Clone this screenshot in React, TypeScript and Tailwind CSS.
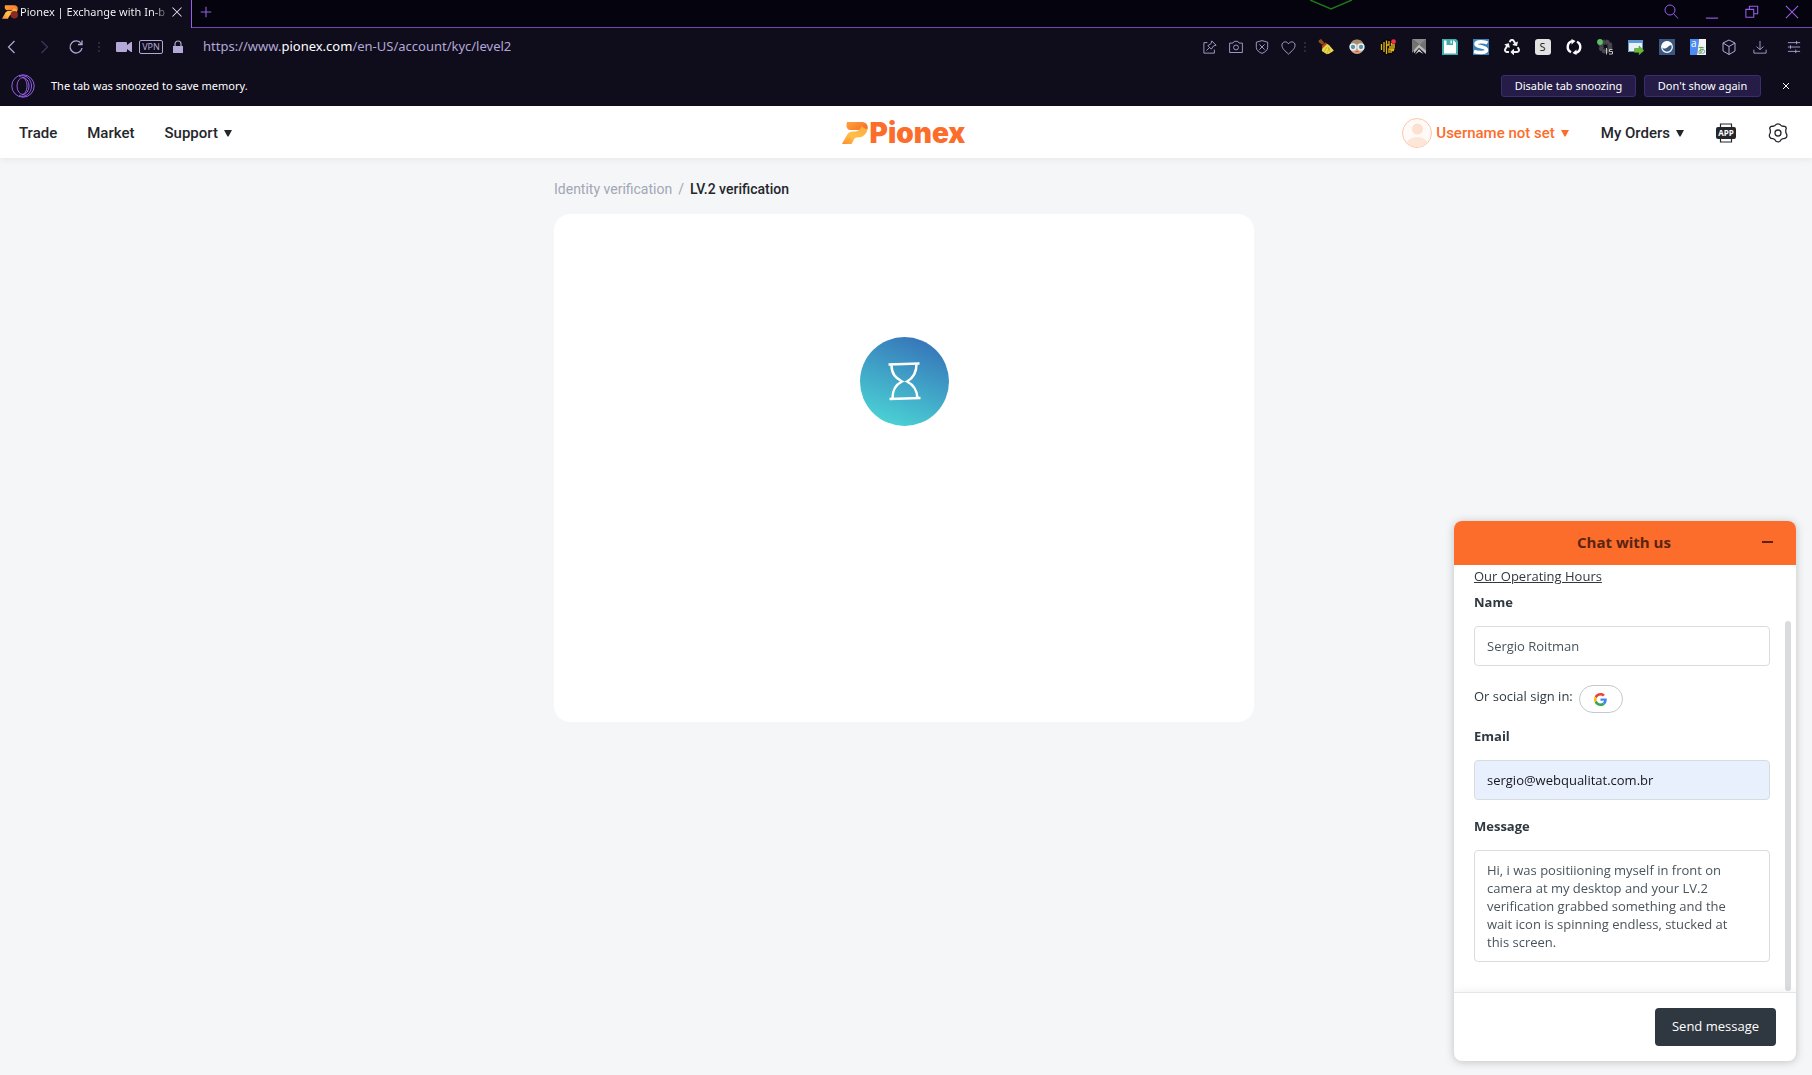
import React from 'react';
import { FaRecycle } from 'react-icons/fa';

type IconProps = { className?: string; children?: React.ReactNode };

const Line: React.FC<IconProps> = ({ className = 'w-4 h-4', children }) => (
  <svg viewBox="0 0 16 16" className={className} fill="none" stroke="currentColor" strokeWidth="1" aria-hidden="true">
    {children}
  </svg>
);

const Solid: React.FC<IconProps> = ({ className = 'w-4 h-4 overflow-visible', children }) => (
  <svg viewBox="0 0 16 16" className={className} aria-hidden="true">
    {children}
  </svg>
);

const PionexMark: React.FC<IconProps> = ({ className, children }) => (
  <svg viewBox="0 0 26 22" className={className} aria-hidden="true">
    <defs>
      <linearGradient id="markTop" x1="0" y1="0" x2="1" y2="0.6">
        <stop offset="0" stopColor="#ffa53a" />
        <stop offset="1" stopColor="#f4742f" />
      </linearGradient>
      <linearGradient id="markLeg" x1="1" y1="0" x2="0" y2="1">
        <stop offset="0" stopColor="#ffab3c" />
        <stop offset="0.6" stopColor="#ffbf4a" />
        <stop offset="1" stopColor="#ff8a2e" />
      </linearGradient>
    </defs>
    <path d="M5 0h14.500c5 0 7 3.500 6 7.500L16 8H8.500C5 8 3.600 4.500 5 0z" fill="url(#markTop)" />
    <path d="M25.500 7c-1 5.500-5 8.500-9.500 8.500-2.500 0-3 .5-4 2L9.500 22H0l5-9c1.500-2.800 3.500-3.500 6.500-3.500C16 9.500 18.500 8 19.500 4c1.500 2 4 3 6 3z" fill="url(#markLeg)" />
    {children}
  </svg>
);

const OperaLogo: React.FC = () => (
  <svg viewBox="0 0 24 24" className="h-6 w-6 text-[#9560ea]" fill="none" stroke="currentColor" strokeWidth="1" aria-hidden="true">
    <circle cx="12" cy="12" r="11.200" />
    <ellipse cx="12" cy="12" rx="6" ry="8.500" />
    <path d="M8 2.500c7-3 12.500 3 12.500 9.500S15 24.500 8 21.500" />
    <path d="M11 3.500c3 0 5 4 5 8.500s-2 8.500-5 8.500" />
  </svg>
);

const GoogleLogo: React.FC = () => (
  <svg viewBox="0 0 48 48" className="h-[13px] w-[13px]" aria-hidden="true">
    <path fill="#EA4335" d="M24 9.500c3.540 0 6.710 1.220 9.210 3.600l6.850-6.850C35.900 2.380 30.470 0 24 0 14.620 0 6.510 5.380 2.560 13.220l7.980 6.190C12.430 13.720 17.740 9.500 24 9.500z" />
    <path fill="#4285F4" d="M46.980 24.550c0-1.570-.15-3.090-.38-4.550H24v9.020h12.940c-.58 2.960-2.260 5.480-4.780 7.180l7.730 6c4.510-4.180 7.090-10.360 7.090-17.650z" />
    <path fill="#FBBC05" d="M10.530 28.590c-.48-1.450-.76-2.990-.76-4.590s.27-3.140.76-4.590l-7.980-6.190C.92 16.460 0 20.120 0 24c0 3.880.92 7.540 2.560 10.780l7.970-6.190z" />
    <path fill="#34A853" d="M24 48c6.480 0 11.930-2.130 15.890-5.810l-7.730-6c-2.150 1.450-4.920 2.300-8.160 2.300-6.260 0-11.570-4.220-13.470-9.910l-7.980 6.190C6.510 42.620 14.620 48 24 48z" />
  </svg>
);

const Caret: React.FC = () => (
  <svg viewBox="0 0 8 7" className="h-[7px] w-2" fill="currentColor" aria-hidden="true">
    <path d="M0 0h8L4.500 6.500h-1z" />
  </svg>
);

const Dots: React.FC = () => (
  <svg viewBox="0 0 2 12" className="h-3 w-0.5 text-[#2c2740]" fill="currentColor" aria-hidden="true">
    <path d="M0 1h2v2H0zM0 5h2v2H0zM0 9h2v2H0z" />
  </svg>
);

const pageActions = [
  {
    label: 'Share',
    icon: <Line className="h-[14px] w-[14px]"><path d="M5 3H1v12h12v-4M10 1l5 5-3 .8-2.500 3.700-4-4L9.300 4zM7.500 8.500 4 12" /></Line>,
  },
  {
    label: 'Snapshot',
    icon: <Line className="h-[14px] w-[14px]"><path d="M.7 3.500h3.800l1.500-2h4l1.500 2h3.800v10.800H.7z" /><circle cx="8" cy="8.500" r="2.800" /></Line>,
  },
  {
    label: 'Block ads',
    icon: <Line className="h-[14px] w-[14px]"><path d="M8 .7l6.500 1.800v6c0 3-3 5.500-6.500 6.800-3.500-1.300-6.500-3.800-6.500-6.800v-6zM5 5l6 6M11 5l-6 6" /></Line>,
  },
  {
    label: 'Bookmark',
    icon: <Line className="h-[15px] w-[15px]"><path d="M8 15C4 11.500 1 9 1 5.500 1 2 5.500.5 8 4c2.500-3.500 7-2 7 1.500C15 9 12 11.500 8 15z" /></Line>,
  },
];

const extensions = [
  {
    label: 'Cleaner',
    icon: (
      <Solid>
        <path d="M.5 1.500 3 0l3.500 4-2.300 1.800L1 3.500z" fill="#8f4f1c" />
        <path d="M4.500 8.500 8.500 4.500 11 6l4.800 5.500c-2 1.500-4 3.500-7 3.700l-5-3.200z" fill="#e8d84a" />
        <path d="M3.500 7 7.500 3.500l1.500 1.500L5 9z" fill="#c5401c" />
        <path d="M6 13l3-5M9 15l2-6M12.500 13.500 10.500 8" stroke="#b39b1c" strokeWidth=".6" />
      </Solid>
    ),
  },
  {
    label: 'Reader',
    icon: (
      <Solid>
        <circle cx="8" cy="8" r="7" fill="#dba483" />
        <path d="M1.200 7C1.500 2.500 4.500.5 8 .5s6.500 2 6.800 6.500L10 4.500z" fill="#a58a6c" />
        <circle cx="4" cy="8" r="2.900" fill="#5d93a8" stroke="#e6f2f6" strokeWidth="1.500" />
        <circle cx="12" cy="8" r="2.900" fill="#5d93a8" stroke="#e6f2f6" strokeWidth="1.500" />
        <path d="M6.500 12.500h3" stroke="#b5524a" />
      </Solid>
    ),
  },
  {
    label: 'Circuit',
    icon: (
      <Solid>
        <circle cx="8" cy="8" r="7.800" fill="#080704" />
        <path d="M1.500 5v6M4 3v10M6.500 1.500V15M9 2v4H7M9 14v-4h5.500M11 14v-2.500h3M9 8h6M11.500 4v2H15" stroke="#e3b51c" strokeWidth="1.300" fill="none" />
        <circle cx="13.500" cy="2.700" r="2.400" fill="#f0304e" />
      </Solid>
    ),
  },
  {
    label: 'Mail',
    icon: (
      <Solid>
        <path d="M1 0h14v12l-6-5.500L1 14z" fill="#737373" />
        <path d="M1 0h14L8 6.500z" fill="#8c8c8c" />
        <path d="M8 5.500l7 6v3.500l-7-6-5 5.500V11z" fill="#b9b9b9" />
        <path d="M8 10l4.500 5L8 12.500 4 15.500z" fill="#dcdcdc" />
        <path d="M1 0l7 6" stroke="#4a4a4a" strokeWidth=".7" fill="none" />
      </Solid>
    ),
  },
  {
    label: 'Save',
    icon: (
      <Solid>
        <path d="M0 0h14l2 2v14H0z" fill="#41acae" />
        <path d="M2 1.500h2.500V6H11V1.500h1L14 4v10.500H2z" fill="#fff" />
        <path d="M8.500 1.500h1.300V4.500H8.500z" fill="#fff" />
      </Solid>
    ),
  },
  {
    label: 'Stylish',
    icon: (
      <Solid>
        <path d="M0 0h16v16H0z" fill="#3f82b8" />
        <path d="M14.500 4C12 2.500 3 1.800 3 5s10.500 2.500 10.500 6S4 13.500 1 12.500" stroke="#fff" strokeWidth="3.600" fill="none" />
      </Solid>
    ),
  },
  {
    label: 'Recycle',
    icon: <FaRecycle className="h-4 w-4 text-[#f0f0f0]" />,
  },
  {
    label: 'Scripts',
    icon: (
      <span className="flex h-4 w-4 items-center justify-center rounded-[3px] bg-[#e2e2e2] text-[11px] leading-4 text-[#222]">S</span>
    ),
  },
  {
    label: 'Refresh all',
    icon: (
      <Solid>
        <path d="M5 13.300A6 6 0 0 1 6 2.200M11 2.700a6 6 0 0 1-1 11.100" stroke="#fff" strokeWidth="2.400" fill="none" />
        <path d="M5.500 0v5.500L9.500 2zM10.500 16v-5.500L6.500 14z" fill="#fff" />
      </Solid>
    ),
  },
  {
    label: 'Settings switcher',
    icon: (
      <Solid>
        <circle cx="8.500" cy="7.500" r="4.500" fill="none" stroke="#47474c" strokeWidth="5" strokeDasharray="2.600 .9" />
        <circle cx="8.500" cy="7.500" r="4.500" fill="none" stroke="#47474c" strokeWidth="3" />
        <circle cx="3" cy="3" r="2.900" fill="#5cc068" />
        <path d="M9.500 9v6.500M15.500 10.500h-3v2h3v2.500H12" stroke="#c4c4c4" strokeWidth="1" fill="none" />
      </Solid>
    ),
  },
  {
    label: 'Open window',
    icon: (
      <Solid>
        <path d="M0 1h15v12H0z" fill="#e9f0f6" />
        <path d="M0 1h15v3H0z" fill="#5c9bdb" />
        <path d="M.5 1.500h14v11H.5z" fill="none" stroke="#5c96cc" />
        <path d="M6.500 9.500H11V7l5 4.500-5 4.500v-2.500H6.500z" fill="#6cb63a" stroke="#3f8a1c" strokeWidth=".5" />
      </Solid>
    ),
  },
  {
    label: 'Browse',
    icon: (
      <Solid>
        <path d="M0 0h16v16H0z" fill="#3a587f" />
        <circle cx="8" cy="8" r="5.300" fill="none" stroke="#fff" strokeWidth="1.200" />
        <path d="M2.500 8C3 4.500 5 2.500 8 2.500s4.500 1.500 5 3.500c-3-.5-4 3-7 3.500-1.500.2-2.500-.5-3.500-1.500z" fill="#fff" />
      </Solid>
    ),
  },
  {
    label: 'Translate',
    icon: (
      <Solid>
        <path d="M0 0h9l-2 16H0z" fill="#4a8cf5" />
        <path d="M9 0h7v16H7z" fill="#f4f4f4" />
        <text x="1" y="8" fontSize="10" fill="#fff" fontFamily="Open Sans">a</text>
        <text x="7.500" y="14" fontSize="8" fill="#2b8a4b" fontFamily="Noto Sans CJK JP">あ</text>
      </Solid>
    ),
  },
  {
    label: 'Extensions',
    icon: <Line><path d="M8 1l6 3v8l-6 3.500L2 12V4zM2 4l6 3.500L14 4M8 7.500v8" /></Line>,
  },
];

const TabStrip: React.FC = () => (
  <div className="relative flex h-7 items-stretch bg-[#05030d]">
    <div className="flex w-48 shrink-0 items-center border-r border-[#9560ea] bg-[#0f0c1b] pb-1 pl-0.5">
      <PionexMark className="h-[14px] w-4 shrink-0">
        <circle cx="20" cy="15.500" r="6" fill="#8a2a22" />
      </PionexMark>
      <span className="ml-0.5 flex-1 bg-linear-to-r from-white from-88% to-transparent bg-clip-text text-[11px] whitespace-nowrap text-transparent">
        Pionex | Exchange with In-b
      </span>
      <button aria-label="Close tab" className="mr-2 text-[#e6e0f5]">
        <Line className="h-3 w-3"><path d="M2 2l12 12M14 2 2 14" strokeWidth="1.400" /></Line>
      </button>
    </div>
    <div className="flex flex-1 items-center justify-between border-b border-[#6f49b0] pr-[13px] pb-1 pl-2 text-[#9560ea]">
      <button aria-label="New tab"><Line className="h-3 w-3"><path d="M8 1v14M1 8h14" strokeWidth="1.400" /></Line></button>
      <div className="flex items-center gap-[26px]">
        <button aria-label="Search tabs"><Line><circle cx="7" cy="6" r="5" /><path d="M10.500 9.500l4.500 5" /></Line></button>
        <button aria-label="Minimize"><Line className="h-[14px] w-[14px]"><path d="M1 15h14" strokeWidth="1.300" /></Line></button>
        <button aria-label="Restore"><Line className="h-[14px] w-[14px]"><path d="M1 5h9v9H1zM5 5V1.500h9.500V10H10" strokeWidth="1.200" /></Line></button>
        <button aria-label="Close window"><Line className="h-[14px] w-[14px]"><path d="M1 1l14 14M15 1 1 15" strokeWidth="1.200" /></Line></button>
      </div>
    </div>
    <svg viewBox="0 0 42 10" className="absolute top-0 right-[460px] h-[10px] w-[42px]" fill="none" stroke="#1c7a17" strokeWidth="1.500" aria-hidden="true">
      <path d="M0 0l21 9L42 0" />
    </svg>
  </div>
);

const AddressBar: React.FC = () => (
  <div className="flex h-[38px] items-center justify-between bg-[#0f0c1b] text-[#b4a8d8]">
    <div className="flex items-center">
      <button aria-label="Back" className="ml-1"><Line><path d="M10.500 2 4.500 8l6 6" strokeWidth="1.200" /></Line></button>
      <button aria-label="Forward" className="ml-4 text-[#3f3859]"><Line><path d="M5.500 2l6 6-6 6" strokeWidth="1.200" /></Line></button>
      <button aria-label="Reload" className="mr-[14px] ml-4"><Line><path d="M13 4.500A6 6 0 1 0 14 9M14 1.500v4h-4" strokeWidth="1.300" /></Line></button>
      <Dots />
      <svg viewBox="0 0 16 12" className="ml-4 h-3 w-4" fill="currentColor" aria-hidden="true">
        <path d="M1 1h9a1 1 0 0 1 1 1v2l4-3h1v10h-1l-4-3v2a1 1 0 0 1-1 1H1a1 1 0 0 1-1-1V2a1 1 0 0 1 1-1z" />
      </svg>
      <span className="ml-[7px] flex h-[14px] w-6 items-center justify-center rounded-[2px] border border-current text-[9px] leading-3">VPN</span>
      <svg viewBox="0 0 10 14" className="ml-[10px] h-[14px] w-[10px]" aria-hidden="true">
        <path d="M0 6h10v7H0z" fill="currentColor" />
        <path d="M2 6V4a3 3 0 0 1 6 0v2" fill="none" stroke="currentColor" strokeWidth="1.200" />
      </svg>
      <span className="ml-5 text-[13px]">
        https://www.<span className="text-white">pionex.com</span>/en-US/account/kyc/level2
      </span>
    </div>
    <div className="flex items-center">
      <div className="flex items-center">
        {pageActions.map((a) => (
          <button key={a.label} aria-label={a.label} className="flex w-[26px] justify-center">{a.icon}</button>
        ))}
      </div>
      <span className="mr-1 ml-[3px]"><Dots /></span>
      <div className="flex items-center">
        {extensions.map((e) => (
          <button key={e.label} aria-label={e.label} className="flex w-[31px] justify-center">{e.icon}</button>
        ))}
      </div>
      <button aria-label="Downloads" className="flex w-8 justify-center">
        <Line className="h-[14px] w-[14px]"><path d="M8 1v10M4 7.500 8 11l4-3.500M1 11v4h14v-4" /></Line>
      </button>
      <button aria-label="Easy setup" className="mr-1 flex w-8 justify-center pl-1">
        <Line className="h-[14px] w-[14px]"><path d="M1 3h14M1 8h14M1 13h14M11 1v4M4 6v4M10 11v4" /></Line>
      </button>
    </div>
  </div>
);

const SnoozeBar: React.FC = () => (
  <div className="flex h-10 items-center justify-between bg-[#0f0c1b] pr-[22px] pl-[11px] text-[11px] text-white">
    <div className="flex items-center gap-4">
      <OperaLogo />
      <span>The tab was snoozed to save memory.</span>
    </div>
    <div className="flex items-center">
      <button className="h-[22px] w-[135px] rounded-[3px] border border-[#3c2d72] bg-[#251d47]">Disable tab snoozing</button>
      <button className="ml-2 h-[22px] w-[117px] rounded-[3px] border border-[#3c2d72] bg-[#251d47]">Don't show again</button>
      <button aria-label="Dismiss" className="ml-[21px]"><Line className="h-2 w-2"><path d="M2 2l12 12M14 2 2 14" strokeWidth="2" /></Line></button>
    </div>
  </div>
);

const SiteHeader: React.FC = () => (
  <header className="relative z-10 grid h-[52px] grid-cols-[1fr_auto_1fr] items-center bg-white pt-0.5 pr-6 pl-[19px] font-['Roboto',sans-serif] text-[15px] font-medium text-[#24262b] shadow-[0_2px_6px_rgba(0,0,0,0.06)]">
    <nav className="flex items-center gap-[30px]">
      <a href="#trade">Trade</a>
      <a href="#market">Market</a>
      <a href="#support" className="flex items-center gap-1.5">Support <Caret /></a>
    </nav>
    <a href="#home" className="flex items-center gap-0.5 font-['Inter',sans-serif] text-[28px] leading-8 font-black text-[#fc6d2c]">
      <PionexMark className="h-[22px] w-[26px]" />
      Pionex
    </a>
    <div className="flex items-center justify-end">
      <a href="#account" className="flex items-center text-[#fc6d2c]">
        <svg viewBox="0 0 30 30" className="mr-1 h-[30px] w-[30px]" aria-hidden="true">
          <circle cx="15" cy="15" r="14.500" fill="#fffaf7" stroke="#fbc7a5" />
          <circle cx="15.500" cy="11" r="5.500" fill="#fde0cf" />
          <path d="M5 24.500c2-7 18-7 20.500 0A14 14 0 0 1 5 24.500z" fill="#fde6d8" />
        </svg>
        <span className="mr-1.5">Username not set</span>
        <Caret />
      </a>
      <a href="#orders" className="ml-8 flex items-center gap-1.5">My Orders <Caret /></a>
      <a href="#app" aria-label="App" className="ml-8">
        <svg viewBox="0 0 20 20" className="h-5 w-5" aria-hidden="true">
          <path d="M4.500 4V1h11v3M4.500 16v3h11v-3" fill="none" stroke="#24262b" strokeWidth="1.200" />
          <rect x="0" y="4" width="20" height="12" rx="2" fill="#24262b" />
          <text x="10" y="12.800" textAnchor="middle" fontSize="8" fontWeight="700" fill="#fff" fontFamily="Open Sans">APP</text>
        </svg>
      </a>
      <a href="#settings" aria-label="Settings" className="ml-8">
        <svg viewBox="0 0 20 20" className="h-5 w-5" fill="none" stroke="#24262b" strokeWidth="1.300" aria-hidden="true">
          <path d="M8 1.500Q10 .2 12 1.500q1.200 2 3.500 1.700Q18 3.200 18.300 5.500q-1 2-.3 4.500 1.500 2 .5 4.200-1.500 1.700-3.500 1.500-2 .3-3 2.500-2 1.300-4 0-1-2.200-3-2.500-2.500 0-3.300-1.800Q.8 12 2.200 10 2.800 7.500 1.700 5.500 2 3.200 4.500 3.200 6.800 3.500 8 1.500z" />
          <circle cx="10" cy="10" r="3" />
        </svg>
      </a>
    </div>
  </header>
);

const ChatWidget: React.FC = () => (
  <form
    onSubmit={(e) => e.preventDefault()}
    className="fixed right-4 bottom-[14px] flex w-[342px] flex-col overflow-hidden rounded-lg bg-white font-['Open_Sans',sans-serif] text-[13px] text-[#2f3941] shadow-[0_1px_8px_rgba(36,36,36,0.25)]"
  >
    <div className="flex h-11 items-center bg-[#fc6d2c] pb-0.5 pl-8 text-[#5a2410]">
      <h2 className="flex-1 text-center text-[15px] font-bold">Chat with us</h2>
      <button type="button" aria-label="Minimize chat" className="mr-[22px] flex h-4 w-3 items-center">
        <span className="h-0.5 w-[11px] bg-current" />
      </button>
    </div>
    <div className="flex">
      <div className="flex-1 pb-[30px] pl-5">
        <a href="#hours" className="mt-0.5 block leading-[18px] underline">Our Operating Hours</a>
        <label htmlFor="name" className="mt-2 block leading-[18px] font-bold">Name</label>
        <input id="name" defaultValue="Sergio Roitman" className="mt-[15px] block h-10 w-full rounded border border-[#d8dcde] bg-white px-3 text-[#49545c]" />
        <div className="mt-[19px] flex h-7 items-start">
          <span className="leading-[22px]">Or social sign in:</span>
          <button type="button" aria-label="Sign in with Google" className="ml-1.5 flex h-7 w-11 items-center justify-center rounded-full border border-[#c2c8cc]">
            <GoogleLogo />
          </button>
        </div>
        <label htmlFor="email" className="mt-[14px] block leading-[18px] font-bold">Email</label>
        <input id="email" type="email" defaultValue="sergio@webqualitat.com.br" className="mt-[15px] block h-10 w-full rounded border border-[#d8dcde] bg-[#e8f0fe] px-3 text-[#15171a]" />
        <label htmlFor="message" className="mt-[17px] block leading-[18px] font-bold">Message</label>
        <textarea
          id="message"
          rows={5}
          defaultValue="Hi, i was positiioning myself in front on camera at my desktop and your LV.2 verification grabbed something and the wait icon is spinning endless, stucked at this screen."
          className="mt-[15px] block w-full resize-none overflow-hidden rounded border border-[#d8dcde] bg-white py-2.5 pr-7 pl-3 leading-[18px] text-[#49545c]"
        />
      </div>
      <div className="mt-[56px] mr-[5px] mb-px ml-[15px] w-1.5 rounded-full bg-[#d8dcde]" />
    </div>
    <div className="flex justify-end border-t border-[#e4e6e8] px-5 py-[15px] shadow-[0_-2px_8px_rgba(0,0,0,0.05)]">
      <button type="submit" className="h-[38px] w-[121px] rounded bg-[#2f3740] text-white">Send message</button>
    </div>
  </form>
);

const App: React.FC = () => {
  return (
    <div className="min-h-screen bg-[#f4f6f8] font-['Noto_Sans',sans-serif]">
      <TabStrip />
      <AddressBar />
      <SnoozeBar />
      <SiteHeader />
      <main className="mx-auto w-full max-w-[704px] pt-[21px] pr-1">
        <div className="flex h-5 items-center gap-1.5 font-['Roboto',sans-serif] text-[14px] text-[#a3a6b5]">
          <a href="#verification">Identity verification</a>
          <span>/</span>
          <span className="font-medium text-[#24262b]">LV.2 verification</span>
        </div>
        <section className="mt-[15px] flex justify-center rounded-2xl bg-white pt-[123px] pb-[296px]">
          <svg viewBox="0 0 89 89" className="h-[89px] w-[89px]" role="img" aria-label="Verification pending">
            <defs>
              <linearGradient id="wait" x1="0.7" y1="0" x2="0.3" y2="1">
                <stop offset="0" stopColor="#3674b9" />
                <stop offset="1" stopColor="#4bd3d5" />
              </linearGradient>
            </defs>
            <circle cx="44.500" cy="44.500" r="44.500" fill="url(#wait)" />
            <path d="M28.500 27.500l31-1M29.500 62l31-1M31.500 28c0 9 4 13 10.500 16.500C35 48 32.500 53 32.500 61M56.500 27c0 9-3 14-9.500 17.500C54 48 57 53 57.500 61" fill="none" stroke="#fff" strokeWidth="2.500" />
          </svg>
        </section>
      </main>
      <ChatWidget />
    </div>
  );
};

export default App;
